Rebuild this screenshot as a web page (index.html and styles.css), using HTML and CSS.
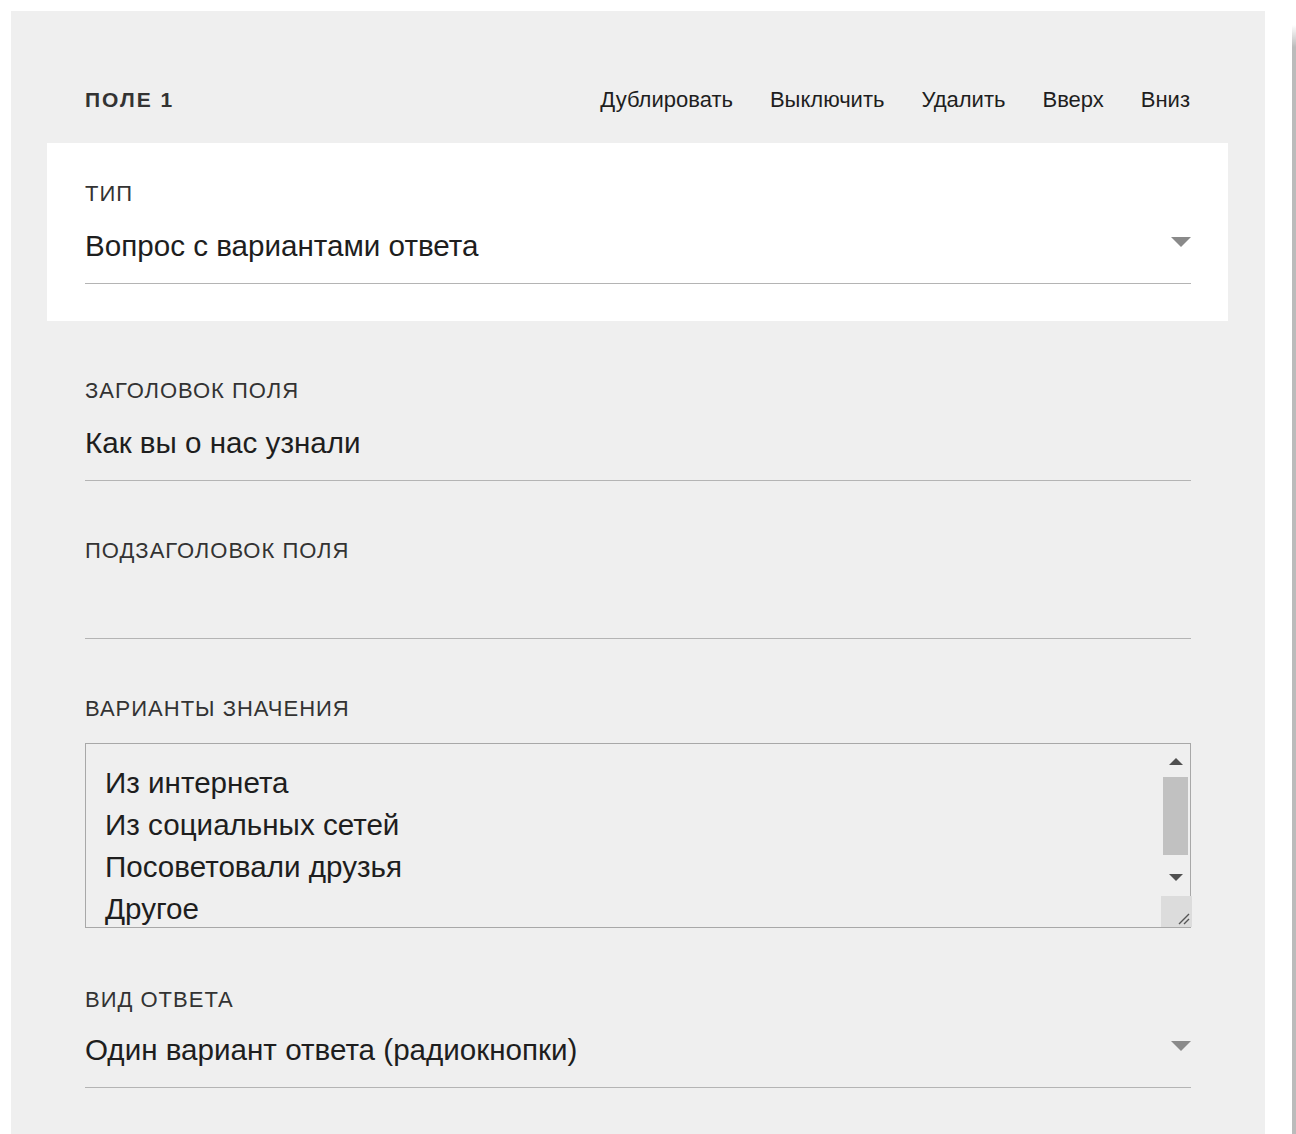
FILE: index.html
```html
<!DOCTYPE html>
<html lang="ru">
<head>
  <meta charset="UTF-8" />
  <title>Поле 1</title>
  <link rel="stylesheet" href="styles.css">
</head>
<body>

  <div class="edge"></div>

  <div class="panel">
    <div class="panel-head">
      <h2>Поле 1</h2>
      <nav class="actions">
        <a href="#">Дублировать</a>
        <a href="#">Выключить</a>
        <a href="#">Удалить</a>
        <a href="#">Вверх</a>
        <a href="#">Вниз</a>
      </nav>
    </div>

    <div class="field field-white">
      <label>Тип</label>
      <div class="select">
        <span>Вопрос с вариантами ответа</span>
        <span class="caret"></span>
      </div>
    </div>

    <div class="field">
      <label>Заголовок поля</label>
      <div class="input">Как вы о нас узнали</div>
    </div>

    <div class="field field-empty">
      <label>Подзаголовок поля</label>
      <div class="input"></div>
    </div>

    <div class="field">
      <label>Варианты значения</label>
      <div class="textarea-wrap">
        <textarea class="textarea">Из интернета
Из социальных сетей
Посоветовали друзья
Другое
</textarea>
        <div class="scrollbar">
          <span class="arrow arrow-up"></span>
          <span class="thumb"></span>
          <span class="arrow arrow-down"></span>
          <span class="grip">
            <svg width="14" height="14" viewBox="0 0 14 14">
              <path d="M3 13 L13 3 M8 13 L13 8" stroke="#555" stroke-width="1.4" fill="none"/>
            </svg>
          </span>
        </div>
      </div>
    </div>

    <div class="field field-last">
      <label>Вид ответа</label>
      <div class="select">
        <span>Один вариант ответа (радиокнопки)</span>
        <span class="caret"></span>
      </div>
    </div>
  </div>

</body>
</html>
```

FILE: styles.css
```css
html, body {
  margin: 0;
  padding: 0;
  background: #fff;
  font-family: "Liberation Sans", Arial, sans-serif;
  color: #1e1e1e;
}

body {
  padding: 11px 31px 0 11px;
  min-height: 1134px;
  box-sizing: border-box;
}

.edge {
  position: fixed;
  top: 25px;
  bottom: 0;
  right: 0;
  width: 4px;
  background: linear-gradient(to bottom, rgba(187,187,187,0), #bbb 22px);
}

.panel {
  background: #efefef;
  padding: 76px 37px 40px 36px;
  min-height: 1123px;
  box-sizing: border-box;
}

.panel-head {
  display: flex;
  align-items: center;
  justify-content: space-between;
  padding: 0 38px 0 38px;
  height: 26px;
  margin-bottom: 30px;
}

.panel-head h2 {
  margin: 0;
  font-size: 21px;
  font-weight: bold;
  text-transform: uppercase;
  letter-spacing: 2px;
  color: #333;
}

.actions {
  display: flex;
  gap: 37px;
}

.actions a {
  color: #1e1e1e;
  text-decoration: none;
  font-size: 22px;
}

.field {
  padding: 57px 37px 0 38px;
}

.field-white {
  background: #fff;
  padding: 38px 37px 37px 38px;
}

.field-empty .input {
  padding-bottom: 17px;
}

.field-last {
  padding-top: 59px;
}

.field-last .select {
  margin-top: 19px;
}

.field label {
  display: block;
  font-size: 22px;
  line-height: 26px;
  text-transform: uppercase;
  color: #333;
  letter-spacing: 1px;
}

.select, .input {
  margin-top: 21px;
  height: 36px;
  padding-bottom: 19px;
  border-bottom: 1px solid #b4b4b4;
  font-size: 29.6px;
  line-height: 36px;
  color: #1e1e1e;
  display: flex;
  align-items: center;
  justify-content: space-between;
}

.caret {
  width: 0;
  height: 0;
  border-left: 10px solid transparent;
  border-right: 10px solid transparent;
  border-top: 10px solid #8a8a8a;
  margin-top: -8px;
}

.textarea-wrap {
  position: relative;
  margin-top: 21px;
  height: 185px;
  box-sizing: border-box;
  border: 1px solid #a8a8a8;
}

.textarea {
  display: block;
  width: 100%;
  height: 100%;
  box-sizing: border-box;
  border: none;
  outline: none;
  resize: none;
  overflow: hidden;
  background: #efefef;
  padding: 18px 40px 0 19px;
  font-family: "Liberation Sans", Arial, sans-serif;
  font-size: 29.6px;
  line-height: 42px;
  color: #1e1e1e;
}

.scrollbar {
  position: absolute;
  top: 0;
  right: 0;
  bottom: 0;
  width: 29px;
  display: flex;
  flex-direction: column;
  align-items: center;
}

.arrow {
  width: 0;
  height: 0;
  border-left: 7px solid transparent;
  border-right: 7px solid transparent;
}

.arrow-up {
  border-bottom: 7px solid #505050;
  margin-top: 14px;
}

.arrow-down {
  border-top: 7px solid #505050;
  margin-top: 19px;
}

.thumb {
  width: 25px;
  height: 78px;
  margin-top: 12px;
  background: #c1c1c1;
}

.grip {
  margin-top: auto;
  margin-left: auto;
  width: 31px;
  height: 31px;
  background: #dcdcdc;
  display: flex;
  align-items: flex-end;
  justify-content: flex-end;
  padding: 0 2px 2px 0;
  box-sizing: border-box;
}
```
